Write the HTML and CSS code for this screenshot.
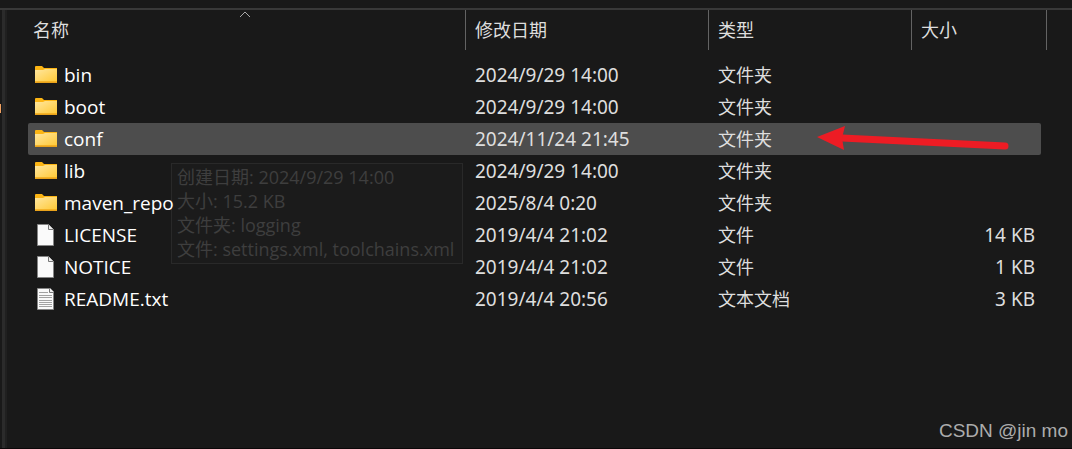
FILE: index.html
```html
<!DOCTYPE html>
<html lang="zh-CN">
<head>
    <meta charset="UTF-8">
    <meta name="viewport" content="width=device-width, initial-scale=1.0">
    <title>conf</title>
    <link rel="stylesheet" href="styles.css">
</head>
<body>
    <!-- Shared icons -->
    <svg class="symbols" width="0" height="0" aria-hidden="true">
        <defs>
            <linearGradient id="folderFill" x1="0" y1="0" x2="1" y2="1">
                <stop offset="0" stop-color="#ffe7a0"/>
                <stop offset="1" stop-color="#ffc937"/>
            </linearGradient>
        </defs>
        <symbol id="folder" viewBox="0 0 22 22">
            <path d="M0 3q0-1 1-1h6l2 2h13v15H0z" fill="#fcb514"/>
            <path d="M0 6h8l2-1h12v12.500H0z" fill="url(#folderFill)"/>
            <path d="M0 17.500h22V18q0 1-1 1H1q-1 0-1-1z" fill="#e9a21b"/>
        </symbol>
        <symbol id="file" viewBox="0 0 22 22">
            <path d="M2.500 .500h11l5 5v16h-16z" fill="#fafafa" stroke="#858585"/>
            <path d="M13.500 .500v5h5" fill="#eee" stroke="#777"/>
        </symbol>
        <symbol id="text" viewBox="0 0 22 22">
            <path d="M2.500 .500h13l3 3v18h-16z" fill="#fafafa" stroke="#858585"/>
            <path d="M14.500 .500v4h4" fill="#eee" stroke="#777"/>
            <path d="M4 4.500h9M4 7.500h13M4 9.500h13M4 12.500h13M4 14.500h13M4 16.500h13M4 18.500h13" stroke="#a2a2a2" fill="none"/>
        </symbol>
    </svg>

    <div class="toolbar"></div>
    <div class="explorer">
        <div class="sidebar"><span class="sidebar-mark"></span></div>
        <main class="files">
            <table>
                <thead>
                    <tr>
                        <th class="col-name">名称
                            <svg class="sort" width="12" height="7" viewBox="0 0 12 7"><path d="M1 6l5-5 5 5" fill="none" stroke="#a8a8a8"/></svg>
                        </th>
                        <th class="col-date">修改日期</th>
                        <th class="col-type">类型</th>
                        <th class="col-size">大小</th>
                    </tr>
                </thead>
                <tbody>
                    <tr>
                        <td class="name"><svg class="icon"><use href="#folder"/></svg>bin</td>
                        <td>2024/9/29 14:00</td>
                        <td class="type">文件夹</td>
                        <td class="size"></td>
                    </tr>
                    <tr>
                        <td class="name"><svg class="icon"><use href="#folder"/></svg>boot</td>
                        <td>2024/9/29 14:00</td>
                        <td class="type">文件夹</td>
                        <td class="size"></td>
                    </tr>
                    <tr class="selected">
                        <td class="name">
                            <svg class="icon"><use href="#folder"/></svg>conf
                            <div class="tooltip" role="tooltip">
                                <div>创建日期: 2024/9/29 14:00</div>
                                <div>大小: 15.2 KB</div>
                                <div>文件夹: logging</div>
                                <div>文件: settings.xml, toolchains.xml</div>
                            </div>
                        </td>
                        <td>2024/11/24 21:45</td>
                        <td class="type">文件夹</td>
                        <td class="size">
                            <svg class="arrow" width="194" height="26" viewBox="0 0 194 26"><path d="M25 12L188 20" stroke="#ed1c24" stroke-width="7" stroke-linecap="round"/><path d="M0 11L28 0l-3 12 2 12z" fill="#ed1c24"/></svg>
                        </td>
                    </tr>
                    <tr>
                        <td class="name"><svg class="icon"><use href="#folder"/></svg>lib</td>
                        <td>2024/9/29 14:00</td>
                        <td class="type">文件夹</td>
                        <td class="size"></td>
                    </tr>
                    <tr>
                        <td class="name"><svg class="icon"><use href="#folder"/></svg>maven_repo</td>
                        <td>2025/8/4 0:20</td>
                        <td class="type">文件夹</td>
                        <td class="size"></td>
                    </tr>
                    <tr>
                        <td class="name"><svg class="icon"><use href="#file"/></svg>LICENSE</td>
                        <td>2019/4/4 21:02</td>
                        <td class="type">文件</td>
                        <td class="size">14 KB</td>
                    </tr>
                    <tr>
                        <td class="name"><svg class="icon"><use href="#file"/></svg>NOTICE</td>
                        <td>2019/4/4 21:02</td>
                        <td class="type">文件</td>
                        <td class="size">1 KB</td>
                    </tr>
                    <tr>
                        <td class="name"><svg class="icon"><use href="#text"/></svg>README.txt</td>
                        <td>2019/4/4 20:56</td>
                        <td class="type">文本文档</td>
                        <td class="size">3 KB</td>
                    </tr>
                </tbody>
            </table>
        </main>
    </div>
    <div class="watermark">CSDN @jin mo</div>
</body>
</html>
```

FILE: styles.css
```css
* {
    box-sizing: border-box;
}

body {
    display: flex;
    flex-direction: column;
    min-height: 100vh;
    margin: 0;
    background-color: #191919;
    border-bottom: 1px solid #0c0809;
    color: #dedede;
    font-family: "Noto Sans", "Noto Sans CJK SC", sans-serif;
    font-size: 19px;
}

.symbols {
    position: absolute;
}

.toolbar {
    height: 10px;
    border-bottom: 2px solid #393939;
}

.explorer {
    display: flex;
    flex: 1;
}

.sidebar {
    width: 7px;
    border-left: 2px solid #191919;
    border-right: 2px solid #202020;
    background-color: #2b2b2b;
}

.sidebar-mark {
    position: absolute;
    left: 0;
    top: 104px;
    width: 1px;
    height: 9px;
    background-color: #f0a060;
}

.files {
    flex: 1;
    padding: 0 25px 0 21px;
}

table {
    width: 100%;
    table-layout: fixed;
    border-spacing: 0;
}

th {
    position: relative;
    height: 40px;
    padding: 0 9px;
    border-right: 1px solid #636363;
    font-size: 18px;
    font-weight: normal;
    line-height: 24px;
    text-align: left;
}

.col-name {
    padding-left: 5px;
}

.col-date {
    width: 243px;
}

.col-type {
    width: 203px;
}

.col-size {
    width: 135px;
}

.sort {
    position: absolute;
    top: 1px;
    left: 50%;
    margin-left: -8px;
}

tbody::before {
    content: "";
    display: block;
    height: 9px;
}

td {
    height: 32px;
    padding: 0 9px;
    line-height: 24px;
    white-space: nowrap;
}

.name {
    position: relative;
    padding-left: 7px;
    color: #fff;
    font-family: "Open Sans", "Noto Sans CJK SC", sans-serif;
}

.icon {
    width: 22px;
    height: 22px;
    margin-right: 7px;
    vertical-align: -4px;
}

.type {
    font-size: 18px;
}

.size {
    position: relative;
    padding-right: 6px;
    border-right: 6px solid transparent;
    background-clip: padding-box;
    text-align: right;
}

.selected td {
    background-color: #4d4d4d;
}

.selected td:first-child {
    border-radius: 2px 0 0 2px;
}

.selected td:last-child {
    border-radius: 0 8px 8px 0 / 0 2px 2px 0;
}

.tooltip {
    position: absolute;
    top: 40px;
    left: 143px;
    padding: 1px 8px 2px 5px;
    background-color: rgba(34, 34, 34, 0.3);
    border: 1px solid #292929;
    color: #3e3e3e;
    font-size: 18px;
    line-height: 24px;
}

.arrow {
    position: absolute;
    top: 3px;
    right: 30px;
}

.watermark {
    position: absolute;
    right: 4px;
    bottom: 6px;
    color: #acacac;
    font-family: "Liberation Sans", Arial, sans-serif;
    font-size: 19px;
    line-height: 24px;
}
```
